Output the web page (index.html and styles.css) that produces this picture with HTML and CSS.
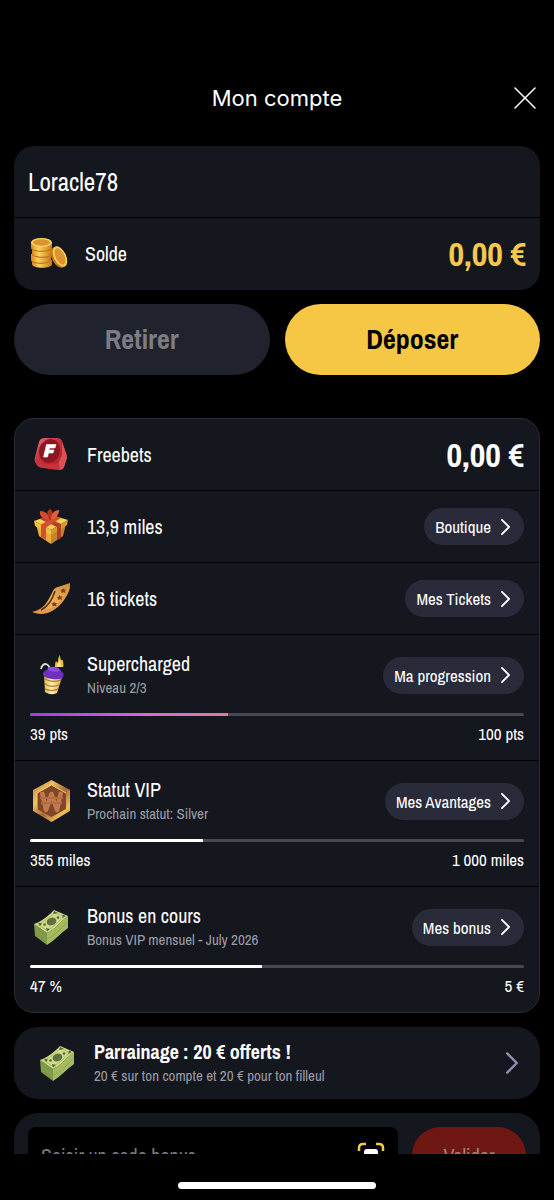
FILE: index.html
```html
<!DOCTYPE html>
<html lang="fr">
<head>
  <meta charset="UTF-8" />
  <meta name="viewport" content="width=device-width, initial-scale=1.0"/>
  <title>Mon compte</title>
  <link rel="stylesheet" href="styles.css">
</head>

<body>
  <!-- Shared icons and gradients -->
  <svg class="defs" width="0" height="0" aria-hidden="true">
    <defs>
      <linearGradient id="gold" x1="0" x2="1" y1="0" y2="0">
        <stop offset="0" stop-color="#d98a1c"/><stop offset=".35" stop-color="#fbd35a"/><stop offset="1" stop-color="#c77a18"/>
      </linearGradient>
      <linearGradient id="red" x1="0" x2="1" y1="0" y2="1">
        <stop offset="0" stop-color="#f0707f"/><stop offset=".4" stop-color="#c9303a"/><stop offset="1" stop-color="#a81f28"/>
      </linearGradient>
      <linearGradient id="ticket" x1="0" x2="1" y1="1" y2="0">
        <stop offset="0" stop-color="#e2813a"/><stop offset=".4" stop-color="#f2b45a"/><stop offset="1" stop-color="#cf9038"/>
      </linearGradient>
      <linearGradient id="cup" x1="0" x2="1" y1="0" y2="0">
        <stop offset="0" stop-color="#d9b45c"/><stop offset=".4" stop-color="#fff0a0"/><stop offset="1" stop-color="#c99e48"/>
      </linearGradient>
      <linearGradient id="bronze" x1="0" x2="1" y1="0" y2="1">
        <stop offset="0" stop-color="#b9793c"/><stop offset=".3" stop-color="#f0c060"/><stop offset=".55" stop-color="#a86a35"/><stop offset=".8" stop-color="#f0bf5a"/><stop offset="1" stop-color="#9a5c30"/>
      </linearGradient>
      <symbol id="chevron" viewBox="0 0 10 18">
        <path d="M1 1l8 8-8 8" fill="none" stroke="currentColor" stroke-width="2" stroke-linecap="round" stroke-linejoin="round"/>
      </symbol>
      <symbol id="cash" viewBox="0 0 44 44">
        <path d="M4 19L17 28V40L5 31z" fill="#7f9948"/>
        <path d="M17 28C25 25 31 16 38 11V23C31 28 25 35 17 40z" fill="#a5b95f"/>
        <path d="M5 25l12 9c8-3 14-11 21-17" fill="none" stroke="#8ba24f" stroke-width=".8"/>
        <path d="M4 19C13 16 19 10 24 5L38 11C31 16 25 25 17 28z" fill="#d0db87"/>
        <path d="M8 19.500C15 16 20 12 24.500 7.500L34 11.500C28 17 24 22 17 25.500z" fill="none" stroke="#a3b268" stroke-width=".8"/>
        <path d="M8 17.500l4 1-2 2.500zM24 6l4 2-5 1zM33 9.500l3 1.500-4 2zM16 23l4 1-3 2.500z" fill="#53633a"/>
        <ellipse cx="21.500" cy="16.500" rx="5" ry="3.800" transform="rotate(-22 21.500 16.500)" fill="#5f7042"/>
        <circle cx="14.500" cy="19.500" r="1.300" fill="#53633a"/>
        <circle cx="28" cy="12.500" r="1.300" fill="#53633a"/>
      </symbol>
    </defs>
  </svg>

  <header class="header">
    <h1>Mon compte</h1>
    <button class="close" aria-label="Fermer">
      <svg width="22" height="22" viewBox="0 0 22 22"><path d="M1 1l20 20M21 1L1 21" stroke="currentColor" stroke-width="1.500" stroke-linecap="round"/></svg>
    </button>
  </header>

  <main class="content">
    <!-- Balance -->
    <section class="card">
      <div class="row">
        <h2 class="username">Loracle78</h2>
      </div>
      <div class="row">
        <svg class="icon" viewBox="0 0 44 44">
          <path d="M4 28v4c0 5 20 5 20 0v-4z" fill="url(#gold)"/>
          <path d="M3 28c0 5 20 5 20 0" fill="#b5701c"/>
          <path d="M3 22v5c0 5 20 5 20 0v-5z" fill="url(#gold)"/>
          <path d="M4 22c0 5 20 5 20 0" fill="#b5701c"/>
          <path d="M4 16v5c0 5 20 5 20 0v-5z" fill="url(#gold)"/>
          <path d="M3 16c0 5 21 5 21 0" fill="#b5701c"/>
          <path d="M3 10.500v4.500c0 5 21 5 21 0v-4.500z" fill="url(#gold)"/>
          <ellipse cx="13.500" cy="10.500" rx="10.500" ry="4.500" fill="#fbd65d"/>
          <ellipse cx="13.500" cy="10.500" rx="8.500" ry="3.200" fill="#dd9430"/>
          <ellipse cx="30" cy="25.500" rx="6" ry="11" transform="rotate(-26 30 25.500)" fill="#c67a1c"/>
          <ellipse cx="32" cy="24.500" rx="6" ry="11" transform="rotate(-26 32 24.500)" fill="#fbd15a"/>
          <ellipse cx="32" cy="24.500" rx="4.300" ry="9" transform="rotate(-26 32 24.500)" fill="#dc9430"/>
        </svg>
        <span class="label">Solde</span>
        <strong class="amount gold">0,00 €</strong>
      </div>
    </section>

    <div class="actions">
      <button class="btn" disabled>Retirer</button>
      <button class="btn btn-primary">Déposer</button>
    </div>

    <!-- Rewards -->
    <section class="card rewards">
      <div class="row">
        <svg class="icon" viewBox="0 0 44 44">
          <path d="M9 9Q10 5 15 5H27Q31 5 32 8L37 23Q37 25 36 28L34 34Q33 37 28 37L14 35Q9 35 7 32L5 29Q4 27 5 24z" fill="url(#red)"/>
          <path d="M32 9L37 23Q37 25 36 28L34 34Q33 37 29 37L28 31L32 22z" fill="#dd5058"/>
          <path d="M5 27Q14 34 29 30L30 37L14 35Q9 35 7 32z" fill="#c9333d"/>
          <ellipse cx="19.500" cy="18" rx="10.500" ry="12" transform="rotate(18 19.500 18)" fill="#8d161f"/>
          <path d="M16.500 11.500H26L25 15H19.500L19 17H24L23 20H18.500L17.500 24H13.500z" fill="#fff" stroke="#fff" stroke-width=".6" stroke-linejoin="round"/>
        </svg>
        <span class="label">Freebets</span>
        <strong class="amount">0,00 €</strong>
      </div>

      <div class="row">
        <svg class="icon" viewBox="0 0 44 44">
          <path d="M6 19L21 27V39L9 31z" fill="#e8ad38"/>
          <path d="M21 27L36 19L33 31L21 39z" fill="#c58425"/>
          <path d="M4 16L21 10L38 15L21 25z" fill="#f8d253"/>
          <path d="M4 16L21 25V30L5 21z" fill="#f3bf42"/>
          <path d="M21 25L38 15L37 20L21 30z" fill="#d99a31"/>
          <path d="M10 14L15 12L31 19V33L27 35V22z" fill="#b83c2c"/>
          <path d="M31 13L26 11L11 19.500V32L16 35V22.500z" fill="#d2502f"/>
          <path d="M20 15C14 15 9 12 10 6C15 6 19 9 20 15z" fill="#d34b2e"/>
          <path d="M20 15C17 11 16 6 20 4C24 6 23 11 21 15z" fill="#b7331f"/>
          <path d="M21 15C21 9 24 5 29 5C29 10 26 13 21 15z" fill="#e2603b"/>
        </svg>
        <span class="label">13,9 miles</span>
        <button class="pill">Boutique <svg class="chevron"><use href="#chevron"/></svg></button>
      </div>

      <div class="row">
        <svg class="icon" viewBox="0 0 44 44">
          <path d="M2 35C14 32 17 26 22 16Q24 10.500 28 10L40 6Q40 12 38 16C33 26 26 33 17 36Q9 38 2 35z" fill="url(#ticket)"/>
          <path d="M2 35Q9 36 17 33C26 30 35 21 40 6Q40 12 38 16C33 26 26 33 17 36Q9 38 2 35z" fill="#e39a49"/>
          <path d="M25 14C22 24 17 30 11 33" fill="none" stroke="#5d3217" stroke-width="1.600"/>
          <path d="M33 11l1 1.500h2l-1 1.500.5 2-2-.8-2 .8v-1.800l-1.300-1.500h2zM29.500 18l1 1.500h2l-1 1.500.5 2-2-.8-2 .8v-1.800l-1.300-1.500h2zM24 24.500l1 1.500h2l-1 1.500.5 2-2-.8-2 .8v-1.800l-1.300-1.500h2z" fill="#7a4320"/>
        </svg>
        <span class="label">16 tickets</span>
        <button class="pill">Mes Tickets <svg class="chevron"><use href="#chevron"/></svg></button>
      </div>

      <div class="row row-progress">
        <div class="row-top">
          <svg class="icon" viewBox="0 0 44 44">
            <path d="M11 16Q12 11 16 11Q19 12 20 16" fill="none" stroke="#d5d5dc" stroke-width="1.800"/>
            <path d="M30 2C30 6 31 8 33 7C33 9 34 13 33 14H25C25 12 25 10 26 8L28 10C28 7 28 4 30 2z" fill="#f5ba38"/>
            <path d="M29.500 7Q31 11 31 14H27Q27 11 29.500 7z" fill="#fff0a0"/>
            <path d="M14 21H33L27 40Q21 43 15 39z" fill="url(#cup)"/>
            <path d="M15 26Q22 30 31 27M15 31Q21 35 29 32M15 36Q21 39 28 36" fill="none" stroke="#a77a38" stroke-width="1.200"/>
            <path d="M13 21Q13 18 17 17Q19 13 24 14Q29 14 31 18Q35 20 33 24Q31 27 22 26Q13 25 13 21z" fill="#6c2fc0"/>
            <path d="M17 17Q19 13 24 14Q29 14 30 18Q24 20 17 17z" fill="#8d50dc"/>
          </svg>
          <div class="texts">
            <span class="label">Supercharged</span>
            <span class="sub">Niveau 2/3</span>
          </div>
          <button class="pill">Ma progression <svg class="chevron"><use href="#chevron"/></svg></button>
        </div>
        <div class="bar"><div class="fill fill-charged" style="width: 40%"></div></div>
        <div class="bounds"><span>39 pts</span><span>100 pts</span></div>
      </div>

      <div class="row row-progress">
        <div class="row-top">
          <svg class="icon" viewBox="0 0 44 44">
            <path d="M21.500 1L40 11V32L21.500 43L3 32V11z" fill="url(#bronze)"/>
            <path d="M21.500 6L36 14V30L21.500 38L7 30V14z" fill="#7d4728"/>
            <path d="M7 30V14L21.500 6L36 14" fill="none" stroke="#f6cf6e" stroke-width="1"/>
            <path d="M12 13L16 31L21.500 15L27 31L31 13" fill="none" stroke="#c27a4c" stroke-width="4.500" stroke-linejoin="round"/>
            <path d="M10 19H33M11 24H32" stroke="#b26c42" stroke-width="2.200"/>
          </svg>
          <div class="texts">
            <span class="label">Statut VIP</span>
            <span class="sub">Prochain statut: Silver</span>
          </div>
          <button class="pill">Mes Avantages <svg class="chevron"><use href="#chevron"/></svg></button>
        </div>
        <div class="bar"><div class="fill" style="width: 35%"></div></div>
        <div class="bounds"><span>355 miles</span><span>1 000 miles</span></div>
      </div>

      <div class="row row-progress">
        <div class="row-top">
          <svg class="icon"><use href="#cash"/></svg>
          <div class="texts">
            <span class="label">Bonus en cours</span>
            <span class="sub">Bonus VIP mensuel - July 2026</span>
          </div>
          <button class="pill">Mes bonus <svg class="chevron"><use href="#chevron"/></svg></button>
        </div>
        <div class="bar"><div class="fill" style="width: 47%"></div></div>
        <div class="bounds"><span>47 %</span><span>5 €</span></div>
      </div>
    </section>

    <!-- Referral -->
    <a class="card referral" href="#">
      <svg class="icon"><use href="#cash"/></svg>
      <div class="texts">
        <strong class="label">Parrainage : 20 € offerts !</strong>
        <span class="sub">20 € sur ton compte et 20 € pour ton filleul</span>
      </div>
      <svg class="chevron chevron-big"><use href="#chevron"/></svg>
    </a>

    <!-- Bonus code -->
    <form class="card code">
      <div class="code-field">
        <input type="text" placeholder="Saisir un code bonus" aria-label="Saisir un code bonus">
        <button type="button" class="scan" aria-label="Scanner">
          <svg width="28" height="28" viewBox="0 0 28 28">
            <path d="M2 9V6Q2 2 6 2H9M19 2H22Q26 2 26 6V9M26 19V22Q26 26 22 26H19M9 26H6Q2 26 2 22V19" fill="none" stroke="#f6c845" stroke-width="2.500"/>
            <rect x="7" y="7" width="14" height="14" rx="3" fill="#fff"/>
          </svg>
        </button>
      </div>
      <button class="validate" disabled>Valider</button>
    </form>
  </main>

  <footer class="footer">
    <div class="home-indicator"></div>
  </footer>
</body>
</html>
```

FILE: styles.css
```css
/* Basic Reset */
* {
  margin: 0;
  padding: 0;
  box-sizing: border-box;
}

body {
  display: flex;
  flex-direction: column;
  height: 100vh;
  background-color: #000;
  color: #fff;
  font-family: "Archivo Narrow", "Liberation Sans Narrow", "Liberation Sans", sans-serif;
  font-size: 20px;
}

button,
input {
  font-family: inherit;
  border: none;
  color: inherit;
}

button {
  cursor: pointer;
}

.defs {
  position: absolute;
}

/* HEADER */
.header {
  display: grid;
  grid-template-columns: 1fr auto 1fr;
  align-items: center;
  flex-shrink: 0;
  padding: 76px 18px 26px;
}

.header h1 {
  grid-column: 2;
  font-family: Inter, sans-serif;
  font-size: 22px;
  font-weight: 400;
  line-height: 44px;
}

.close {
  justify-self: end;
  display: flex;
  background: none;
}

/* SCROLLING CONTENT */
.content {
  flex: 1;
  min-height: 0;
  padding: 0 14px;
  overflow-y: auto;
  scrollbar-width: none;
}

.card {
  background-color: #15171e;
  border-radius: 20px;
  overflow: hidden;
}

.row {
  display: flex;
  align-items: center;
  gap: 13px;
  min-height: 72px;
  padding: 0 14px;
  border-bottom: 1px solid #000;
}

.row:last-child {
  border-bottom: none;
}

.icon {
  flex-shrink: 0;
  width: 44px;
  height: 44px;
}

.username {
  font-size: 25px;
  font-weight: 400;
}

.label {
  font-size: 20px;
  line-height: 26px;
}

.sub {
  color: #9b9ca7;
  font-size: 15px;
  line-height: 22px;
}

.texts {
  display: flex;
  flex-direction: column;
}

.amount {
  margin-left: auto;
  font-size: 34px;
}

.gold {
  color: #f6c84c;
}

/* BUTTONS */
.actions {
  display: flex;
  gap: 15px;
  margin: 14px 0 43px;
}

.btn {
  flex: 1;
  height: 71px;
  padding-bottom: 2px;
  border-radius: 36px;
  background-color: #20222d;
  color: #7c7d84;
  font-size: 28px;
  font-weight: 700;
}

.btn-primary {
  background-color: #f6c745;
  color: #000;
}

.pill {
  display: flex;
  align-items: center;
  gap: 10px;
  height: 37px;
  margin-left: auto;
  padding: 0 14px 0 11px;
  border-radius: 19px;
  background-color: #2a2b3a;
  font-size: 17px;
  white-space: nowrap;
}

.chevron {
  width: 9px;
  height: 16px;
}

/* REWARDS */
.rewards {
  border: 1px solid #2b2c37;
}

.rewards .row {
  padding: 0 15px;
}

.rewards .row-progress {
  display: block;
  padding: 16px 15px 15px;
}

.row-top {
  display: flex;
  align-items: center;
  gap: 13px;
  height: 48px;
}

.bar {
  height: 3px;
  margin: 14px 0 7px;
  border-radius: 2px;
  background-color: #464853;
  overflow: hidden;
}

.fill {
  height: 100%;
  background-color: #fff;
}

.fill-charged {
  background: linear-gradient(90deg, #9b40e2, #d66bd6 60%, #e27890);
}

.bounds {
  display: flex;
  justify-content: space-between;
  font-size: 17px;
  line-height: 22px;
}

/* REFERRAL */
.referral {
  display: flex;
  align-items: center;
  gap: 14px;
  min-height: 72px;
  margin: 14px 0;
  padding: 0 22px;
  border-radius: 24px;
  color: inherit;
  text-decoration: none;
}

.chevron-big {
  width: 12px;
  height: 22px;
  margin-left: auto;
  color: #8d8fb0;
}

/* BONUS CODE */
.code {
  display: flex;
  gap: 14px;
  padding: 14px;
  border-radius: 24px;
}

.code-field {
  display: flex;
  align-items: center;
  flex: 1;
  height: 57px;
  padding: 0 13px;
  border-radius: 8px;
  background-color: #000;
}

.code-field input {
  flex: 1;
  min-width: 0;
  background: none;
  font-size: 20px;
}

.code-field input::placeholder {
  color: #7c7d84;
}

.scan {
  display: flex;
  background: none;
}

.validate {
  width: 114px;
  height: 57px;
  border-radius: 29px;
  background-color: #6f1712;
  color: #a58380;
  font-size: 20px;
}

/* HOME INDICATOR */
.footer {
  display: flex;
  justify-content: center;
  align-items: flex-end;
  flex-shrink: 0;
  height: 46px;
  padding-bottom: 11px;
}

.home-indicator {
  width: 198px;
  height: 7px;
  border-radius: 4px;
  background-color: #fff;
}
```
